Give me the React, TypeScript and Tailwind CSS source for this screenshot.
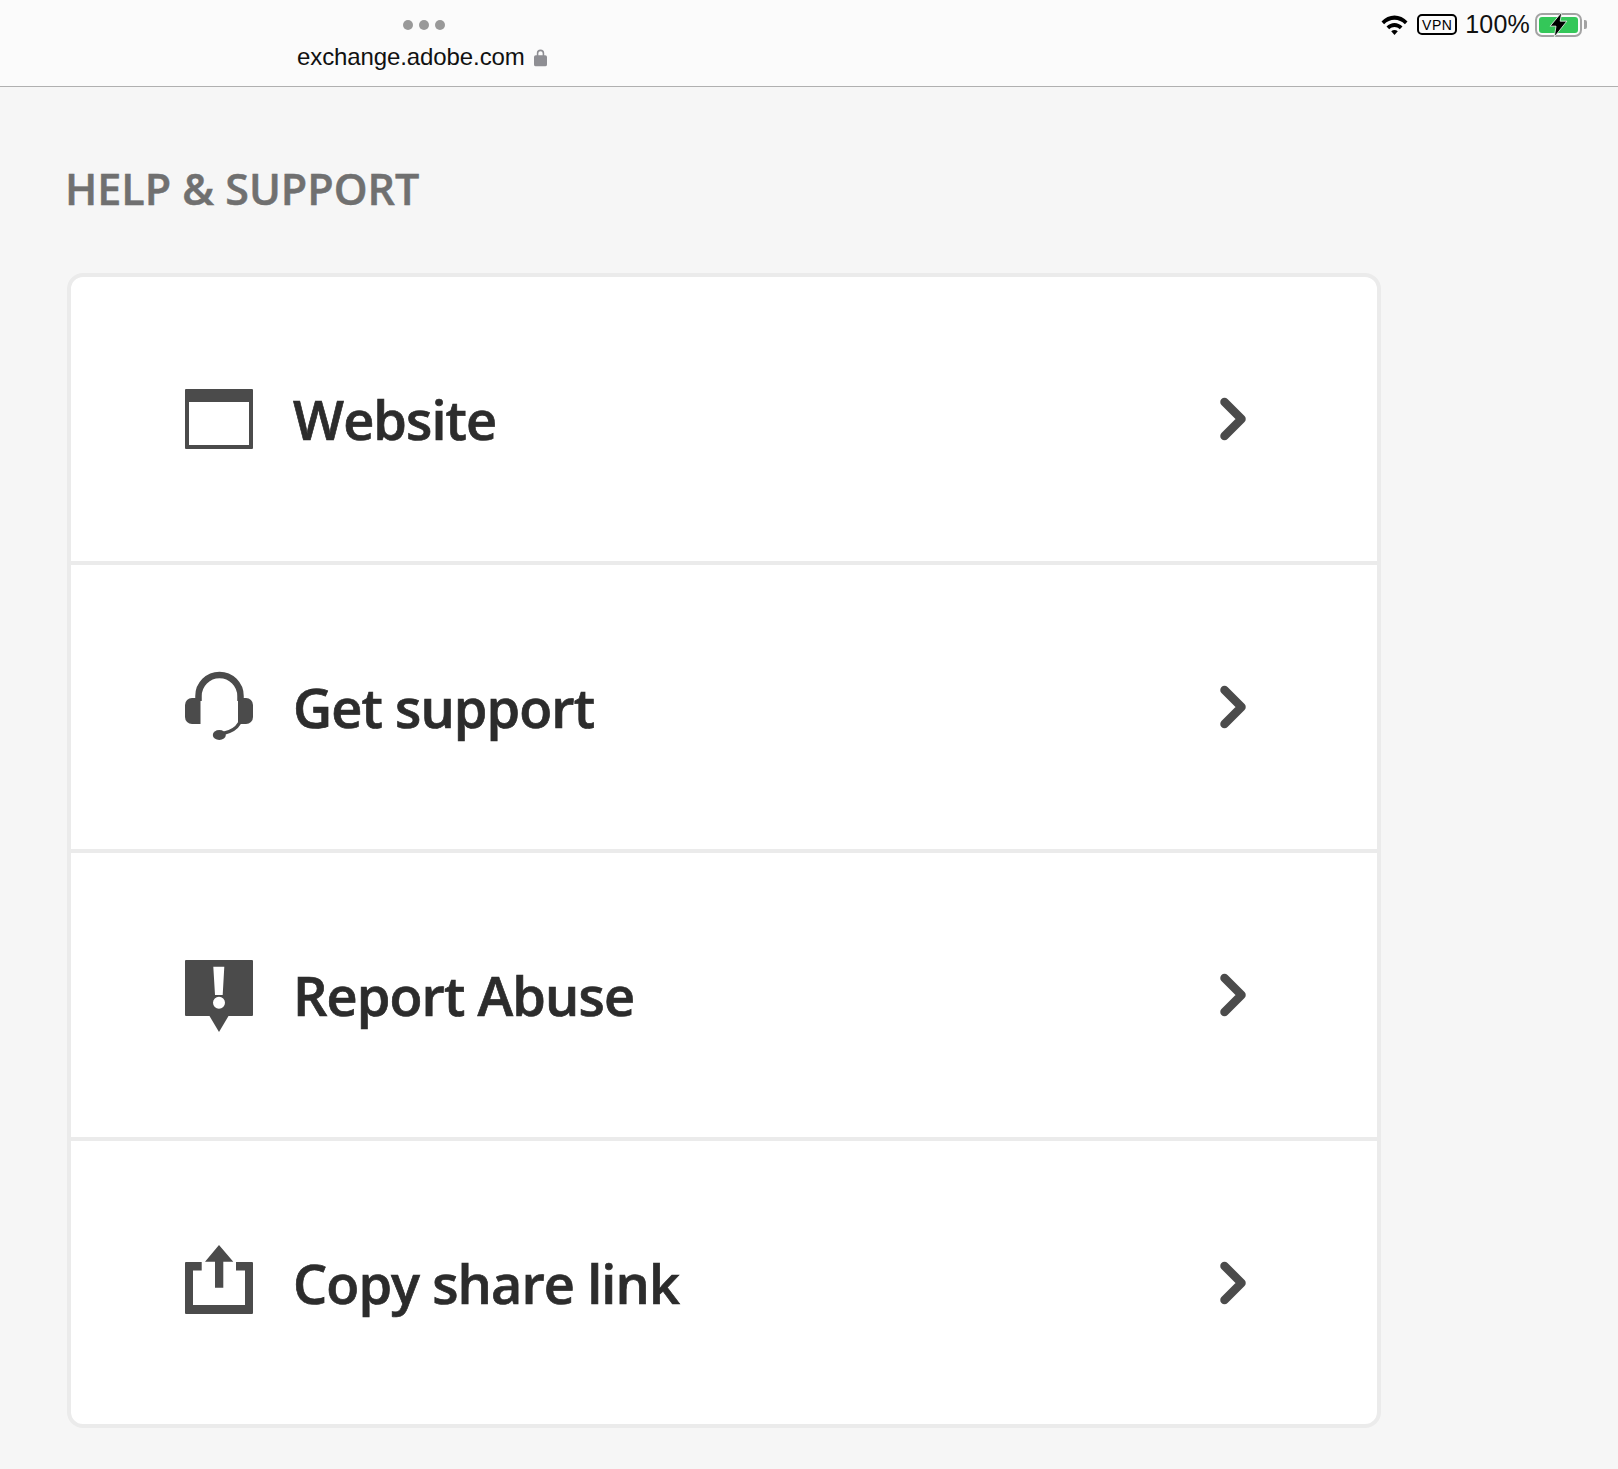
const rowIcon = "w-[68px] h-[68px] shrink-0 overflow-visible text-[#4b4b4b]";

function WebsiteIcon() {
  return (
    <svg viewBox="0 0 68 68" className={rowIcon} fill="currentColor">
      <path
        fillRule="evenodd"
        d="M1 4h66a1 1 0 0 1 1 1v58a1 1 0 0 1-1 1H1a1 1 0 0 1-1-1V5a1 1 0 0 1 1-1zM4 17v43h60V17z"
      />
    </svg>
  );
}

function SupportIcon() {
  return (
    <svg viewBox="0 0 68 68" className={rowIcon} fill="currentColor">
      <path d="M13.5 28V23a21 21 0 0 1 42 0v5" fill="none" stroke="currentColor" strokeWidth="6.5" />
      <path d="M15.5 25H7a7 7 0 0 0-7 7v12a7 7 0 0 0 7 7h8.500z" />
      <path d="M53 25h8a7 7 0 0 1 7 7v12a7 7 0 0 1-7 7h-8z" />
      <path d="M38 60.500Q50 58 54.500 50" fill="none" stroke="currentColor" strokeWidth="3.500" />
      <ellipse cx="34.300" cy="62" rx="6.500" ry="5" />
    </svg>
  );
}

function AbuseIcon() {
  return (
    <svg viewBox="0 0 68 68" className={rowIcon} fill="currentColor">
      <path
        fillRule="evenodd"
        d="M1-1h66a1 1 0 0 1 1 1v54a1 1 0 0 1-1 1H43.500L34 71 24.500 55H1a1 1 0 0 1-1-1V0a1 1 0 0 1 1-1zM28.300 5.700l1.700 28.300h7.700l1.600-28.300zM34 35.700a6 6 0 1 0 0 12 6 6 0 0 0 0-12z"
      />
    </svg>
  );
}

function ShareIcon() {
  return (
    <svg viewBox="0 0 68 68" className={rowIcon} fill="currentColor">
      <path d="M1 13h15.700v8.500H8V56h52V21.500h-9V13h16a1 1 0 0 1 1 1v50a1 1 0 0 1-1 1H1a1 1 0 0 1-1-1V14a1 1 0 0 1 1-1z" />
      <path d="M34-4 48.300 12.700H38.300V38.700H30V12.700H20z" />
    </svg>
  );
}

function Chevron() {
  return (
    <svg viewBox="0 0 26 44" className="w-[26px] h-[44px] shrink-0" fill="none">
      <path
        d="M4.500 5 21.500 22 4.500 39"
        stroke="#4b4b4b"
        strokeWidth="8.500"
        strokeLinecap="round"
        strokeLinejoin="round"
      />
    </svg>
  );
}

function StatusBar() {
  return (
    <div className="flex items-center pt-[12px] pr-[31px]">
      <svg viewBox="0 0 26 20" className="w-[27px] h-[20px]" fill="#000">
        <path d="M0 6.500C7-1.500 19-1.500 26 6.500l-2.600 2.800C17.800 3.300 8.200 3.300 2.600 9.300z" />
        <path d="M5 11.500c4.700-4.800 11.300-4.800 16 0l-2.700 2.800c-3.200-3.200-7.400-3.200-10.600 0z" />
        <path d="M9.700 16.300c2-1.800 4.600-1.800 6.600 0L13 20z" />
      </svg>
      <div className="ml-[9px] flex h-[21px] w-[40px] items-center justify-center rounded-[5px] border-2 border-black font-['Liberation_Sans',sans-serif] text-[14px] leading-none tracking-[0.5px] text-black">
        VPN
      </div>
      <span className="ml-[8px] font-['Liberation_Sans',sans-serif] text-[25px] leading-none tracking-[0.2px] text-[#111]">
        100%
      </span>
      <div className="ml-[5px] flex items-center">
        <div className="relative h-[24px] w-[47px] rounded-[7px] border-2 border-[#a3a3a3] p-[2px]">
          <div className="h-full w-full rounded-[3px] bg-[#34c759]" />
          <svg viewBox="0 0 20 30" className="absolute left-[12px] top-[-3px] h-[25px] w-[19px] overflow-visible">
            <path
              d="M14 0 0 17h7L5 30 20 11h-8z"
              fill="#000"
              stroke="#e8f5ea"
              strokeWidth="1"
              strokeLinejoin="round"
            />
          </svg>
        </div>
        <div className="ml-[2px] h-[9px] w-[3px] rounded-r-[2px] bg-[#a3a3a3]" />
      </div>
    </div>
  );
}

function Header() {
  return (
    <div className="flex h-[87px] items-start justify-between border-b border-[#b0b0b0] bg-[#fbfbfb] pl-[297px]">
      <div className="flex flex-col items-center pt-[20px]">
        <div className="flex gap-[6px] pl-[4px]">
          <div className="h-[10px] w-[10px] rounded-full bg-[#999]" />
          <div className="h-[10px] w-[10px] rounded-full bg-[#999]" />
          <div className="h-[10px] w-[10px] rounded-full bg-[#999]" />
        </div>
        <div className="mt-[13px] flex items-center">
          <span className="font-['Liberation_Sans',sans-serif] text-[24px] leading-[28px] tracking-[-0.1px] text-[#111]">
            exchange.adobe.com
          </span>
          <svg viewBox="0 0 14 19" className="ml-[9px] h-[19px] w-[13px]" fill="#8e8e93">
            <path
              fillRule="evenodd"
              d="M3 7V5a4 4 0 0 1 8 0v2h1a2 2 0 0 1 2 2v8a2 2 0 0 1-2 2H2a2 2 0 0 1-2-2V9a2 2 0 0 1 2-2zm1.700 0h4.600V5a2.300 2.300 0 0 0-4.600 0z"
            />
          </svg>
        </div>
      </div>
      <StatusBar />
    </div>
  );
}

const rows = [
  { label: "Website", icon: <WebsiteIcon /> },
  { label: "Get support", icon: <SupportIcon /> },
  { label: "Report Abuse", icon: <AbuseIcon /> },
  { label: "Copy share link", icon: <ShareIcon /> },
];

export default function App() {
  return (
    <div className="min-h-[1469px] bg-[#f6f6f6] font-['Open_Sans',sans-serif]">
      <Header />
      <div className="pl-[67px] pt-[74px]">
        <h2 className="-ml-[2px] text-[43px] font-semibold leading-[56px] tracking-[0px] text-[#707070] [-webkit-text-stroke:0.5px_#707070]">
          HELP &amp; SUPPORT
        </h2>
        <div className="mt-[56px] w-[1314px] divide-y-4 divide-[#ebebeb] rounded-[16px] border-4 border-[#ebebeb] bg-white">
          {rows.map((row) => (
            <div
              key={row.label}
              className="flex h-[288px] items-center pl-[114px] pr-[131px] last:h-[283px]"
            >
              {row.icon}
              <span className="ml-[40px] text-[54px] font-semibold leading-none tracking-[-0.9px] text-[#2c2c2c] [-webkit-text-stroke:0.7px_#2c2c2c]">
                {row.label}
              </span>
              <div className="ml-auto">
                <Chevron />
              </div>
            </div>
          ))}
        </div>
      </div>
    </div>
  );
}
